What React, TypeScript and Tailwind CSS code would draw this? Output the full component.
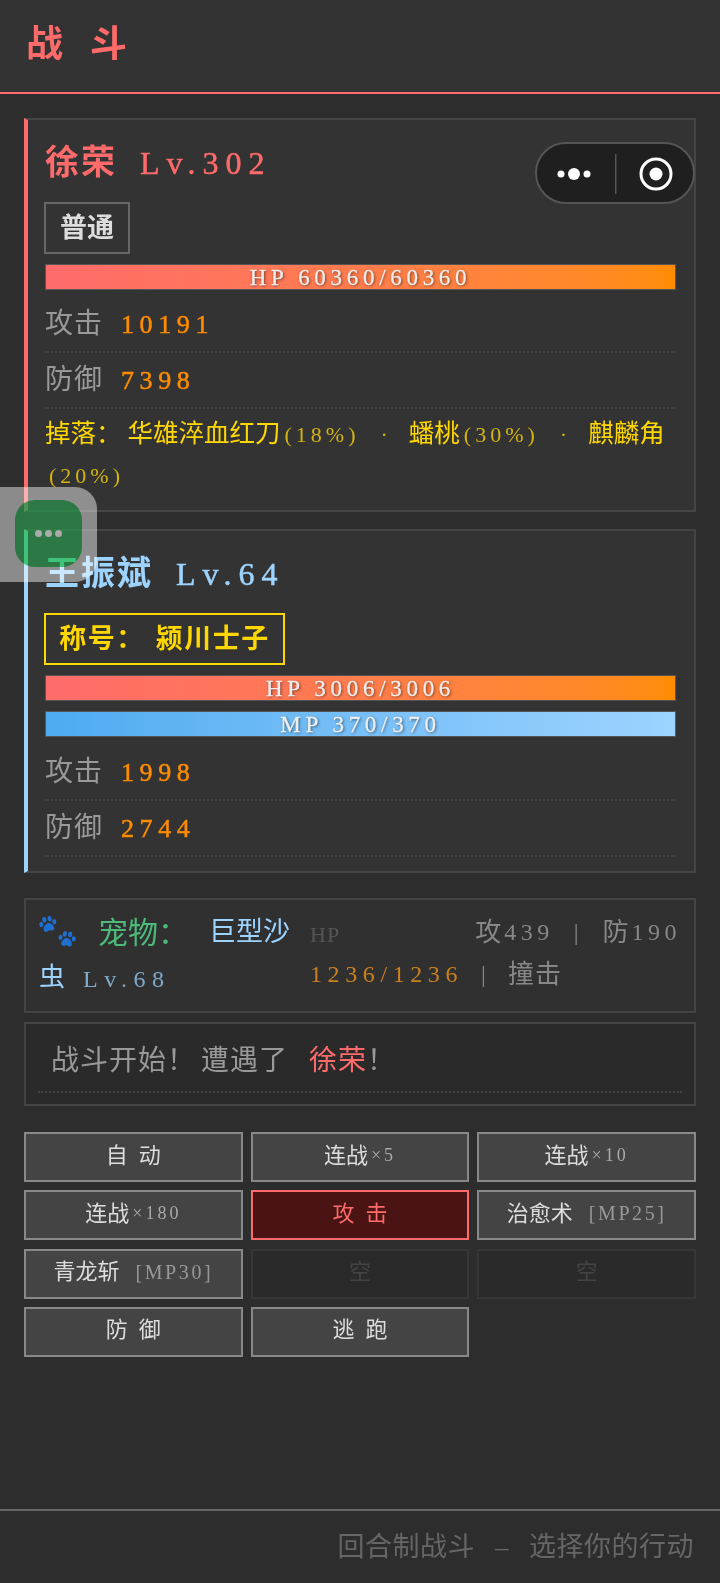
const serif = "font-['Liberation_Serif','Noto_Sans_CJK_SC',serif]";

function Bar({ label, kind }: { label: string; kind: 'hp' | 'mp' }) {
  const fill = kind === 'hp' ? 'from-[#ff6b6b] to-[#ff8c00]' : 'from-[#4dabf0] to-[#9dd3ff]';
  return (
    <div className={`h-[26px] border border-[#555] bg-gradient-to-r ${fill} flex items-center justify-center ml-px`}>
      <span className="text-[23px] leading-none tracking-[4.7px] text-[#eee] [-webkit-text-stroke:0.3px] [text-shadow:1px_1px_3px_rgba(0,0,0,0.6)]">{label}</span>
    </div>
  );
}

function Stat({ label, value }: { label: string; value: string }) {
  return (
    <div className="h-[56px] border-b-2 border-dotted border-[#444] flex items-center">
      <span className="text-[28px] tracking-[1px] text-[#999] w-[76px] ml-px">{label}</span>
      <span className="text-[26px] tracking-[5.6px] text-[#ff8c00] [-webkit-text-stroke:0.5px]">{value}</span>
    </div>
  );
}

function Name({ name, level, color }: { name: string; level: string; color: string }) {
  return (
    <div className={`h-[48px] pt-[5px] flex items-center ml-px ${color}`}>
      <span className="text-[34px] tracking-[2px] font-bold">{name}</span>
      <span className="ml-[23px] text-[32px] tracking-[7px] [-webkit-text-stroke:0.5px]">{level}</span>
    </div>
  );
}

function Paw({ className }: { className: string }) {
  return (
    <svg width="18" height="16" viewBox="0 0 20 18" fill="#1f6fcf" className={className}>
      <path d="M10 8c3 0 6 3.500 6 6.500 0 2.500-2.500 3-3.500 2.500-1-.4-1.800-.8-2.500-.8s-1.500.4-2.500.8C6.500 17.500 4 17 4 14.500 4 11.500 7 8 10 8z" />
      <ellipse cx="2.500" cy="8" rx="2.300" ry="3" />
      <ellipse cx="7" cy="3.500" rx="2.300" ry="3.200" />
      <ellipse cx="13" cy="3.500" rx="2.300" ry="3.200" />
      <ellipse cx="17.500" cy="8" rx="2.300" ry="3" />
    </svg>
  );
}

function Btn({ children, variant = 'normal' }: { children?: React.ReactNode; variant?: 'normal' | 'attack' | 'empty' }) {
  const look = {
    normal: 'border-[#888] bg-[#444] text-[#ddd]',
    attack: 'border-[#ff6b6b] bg-[#4a1414] text-[#ff6b6b]',
    empty: 'border-[#363636] bg-[#2a2a2a] text-[#444]',
  }[variant];
  return <div className={`h-[50px] pb-[4px] border-2 flex items-center justify-center text-[22px] whitespace-pre [word-spacing:5.5px] ${look}`}>{children}</div>;
}

const Small = ({ children }: { children: React.ReactNode }) => (
  <span className="ml-[3px] text-[18px] tracking-[3px] text-[#aaa]">{children}</span>
);
const Mp = ({ children }: { children: React.ReactNode }) => (
  <span className="ml-[16px] text-[20px] tracking-[2.6px] text-[#999]">{children}</span>
);
const Pct = ({ children }: { children: React.ReactNode }) => (
  <span className="ml-[4px] text-[22px] tracking-[4px] text-[#d4b40f]">{children}</span>
);
const Dot = () => <span className="mx-[21px] text-[22px] text-[#d4b40f]">·</span>;

export default function App() {
  return (
    <div className={`relative w-[720px] h-[1583px] overflow-hidden bg-[#2d2d2d] flex flex-col ${serif}`}>
      <header className="h-[94px] bg-[#333] border-b-2 border-[#ff6b6b] pl-[26px] pt-[22px]">
        <h1 className="text-[37px] leading-[46px] font-bold tracking-[27px] text-[#ff6b6b] whitespace-pre">战斗</h1>
      </header>

      <main className="flex-1 px-6 pt-6">
        <section className="h-[394px] bg-[#333] border-2 border-[#444] border-l-4 border-l-[#ff6b6b] pl-4 pr-[18px] pt-4">
          <Name name="徐荣" level="Lv.302" color="text-[#ff6b6b]" />
          <div className="mt-[18px] w-[86px] h-[52px] border-2 border-[#666] flex items-center justify-center text-[27px] font-bold text-[#ddd]">普通</div>
          <div className="mt-[10px]"><Bar kind="hp" label="HP 60360/60360" /></div>
          <div className="mt-[7px]">
            <Stat label="攻击" value="10191" />
            <Stat label="防御" value="7398" />
          </div>
          <p className="mt-[5px] ml-px text-[25.5px] leading-[40px] text-[#ffd700]">
            掉落：<span className="ml-[6px]">华雄淬血红刀</span><Pct>(18%)</Pct><Dot />蟠桃<Pct>(30%)</Pct><Dot />麒麟角<Pct>(20%)</Pct>
          </p>
        </section>

        <section className="mt-[17px] h-[344px] bg-[#333] border-2 border-[#444] border-l-4 border-l-[#9dd3ff] pl-4 pr-[18px] pt-4">
          <Name name="王振斌" level="Lv.64" color="text-[#9dd3ff]" />
          <div className="mt-[18px] w-[241px] h-[52px] border-2 border-[#ffd700] flex items-center justify-center text-[27px] font-bold tracking-[1.5px] text-[#ffd700]">称号：<span className="ml-[11px]">颍川士子</span></div>
          <div className="mt-[10px] flex flex-col gap-[10px]">
            <Bar kind="hp" label="HP 3006/3006" />
            <Bar kind="mp" label="MP 370/370" />
          </div>
          <div className="mt-2">
            <Stat label="攻击" value="1998" />
            <Stat label="防御" value="2744" />
          </div>
        </section>

        <section className="mt-[25px] h-[115px] bg-[#303030] border-2 border-[#444] pl-[13px] pr-[13px] pt-[10px] flex gap-[5px]">
          <div className="w-[266px] shrink-0 text-[#9dd3ff]">
            <div className="h-[44px] flex items-center">
              <div className="relative w-[38px] h-[33px] shrink-0">
                <Paw className="absolute left-0 top-0 -rotate-12" />
                <Paw className="absolute left-[19px] top-[15px] rotate-6" />
              </div>
              <span className="ml-[21px] text-[30px] text-[#4cbb7a]">宠物：</span>
              <span className="ml-[21px] text-[27px]">巨型沙</span>
            </div>
            <div className="h-[44px] pt-[2px] flex items-center">
              <span className="text-[26px]">虫</span>
              <span className="ml-[18px] pt-[4px] text-[24px] tracking-[6.5px] text-[#7fa9c9]">Lv.68</span>
            </div>
          </div>
          <div className="flex-1 text-[#888]">
            <div className="h-[44px] flex items-center justify-between">
              <span className="pt-[4px] text-[22px] tracking-[1px] text-[#555]">HP</span>
              <span className="flex items-center text-[24px] tracking-[4.5px]">
                <span className="text-[26px] tracking-normal mr-[3px]">攻</span>439
                <span className="ml-[20px] mr-[24px] tracking-normal">|</span>
                <span className="text-[26px] tracking-normal mr-[3px]">防</span>190
              </span>
            </div>
            <div className="h-[40px] flex items-center text-[24px]">
              <span className="tracking-[5.6px] text-[#c9801f]">1236/1236</span>
              <span className="ml-[18px]">|</span>
              <span className="ml-[22px] text-[26px] tracking-[1px]">撞击</span>
            </div>
          </div>
        </section>

        <section className="mt-[9px] h-[84px] bg-[#2a2a2a] border-2 border-[#444] px-[12px]">
          <div className="h-[69px] pt-[7px] border-b-2 border-dotted border-[#444] pl-[13px] flex items-center text-[28px] tracking-[1px] text-[#999] whitespace-pre">
            战斗开始！<span className="ml-[5px]">遭遇了</span><span className="ml-[21px] text-[#ff6b6b]">徐荣</span>！
          </div>
        </section>

        <section className="mt-[26px] grid grid-cols-3 gap-x-2 gap-y-[8.33px]">
          <Btn>自 动</Btn>
          <Btn>连战<Small>×5</Small></Btn>
          <Btn>连战<Small>×10</Small></Btn>
          <Btn>连战<Small>×180</Small></Btn>
          <Btn variant="attack">攻 击</Btn>
          <Btn>治愈术<Mp>[MP25]</Mp></Btn>
          <Btn>青龙斩<Mp>[MP30]</Mp></Btn>
          <Btn variant="empty">空</Btn>
          <Btn variant="empty">空</Btn>
          <Btn>防 御</Btn>
          <Btn>逃 跑</Btn>
        </section>
      </main>

      <footer className="h-[74px] border-t-2 border-[#666] pr-[26px] pt-[16px] text-right text-[27px] leading-[40px] tracking-[0.5px] text-[#666] whitespace-pre">
        回合制战斗<span className="mx-[20px]">–</span>选择你的行动
      </footer>

      {/* wechat capsule */}
      <div className="absolute left-[535px] top-[142px] w-[160px] h-[62px] rounded-full bg-[#1f1f1f] border-2 border-[#555]">
        <svg width="156" height="58" viewBox="0 0 156 58" fill="#fff">
          <circle cx="24" cy="30" r="3.5" />
          <circle cx="37" cy="30" r="6" />
          <circle cx="50" cy="30" r="3.5" />
          <rect x="78" y="10" width="1.5" height="40" fill="#555" />
          <circle cx="119" cy="30" r="15" fill="none" stroke="#fff" strokeWidth="3" />
          <circle cx="119" cy="30" r="6.5" />
        </svg>
      </div>

      {/* floating minimized window */}
      <div className="absolute left-0 top-[487px] w-[97px] h-[95px] rounded-r-[22px] bg-[rgba(255,255,255,0.45)]">
        <div className="absolute left-[15px] top-[13px] w-[67px] h-[67px] rounded-[20px] bg-[#50d87a] mix-blend-multiply" />
        <div className="absolute left-[15px] top-[13px] w-[67px] h-[67px] flex items-center justify-center gap-[3px]">
          <span className="w-[7px] h-[7px] rounded-full bg-[#aaa]" />
          <span className="w-[7px] h-[7px] rounded-full bg-[#aaa]" />
          <span className="w-[7px] h-[7px] rounded-full bg-[#aaa]" />
        </div>
      </div>
    </div>
  );
}
